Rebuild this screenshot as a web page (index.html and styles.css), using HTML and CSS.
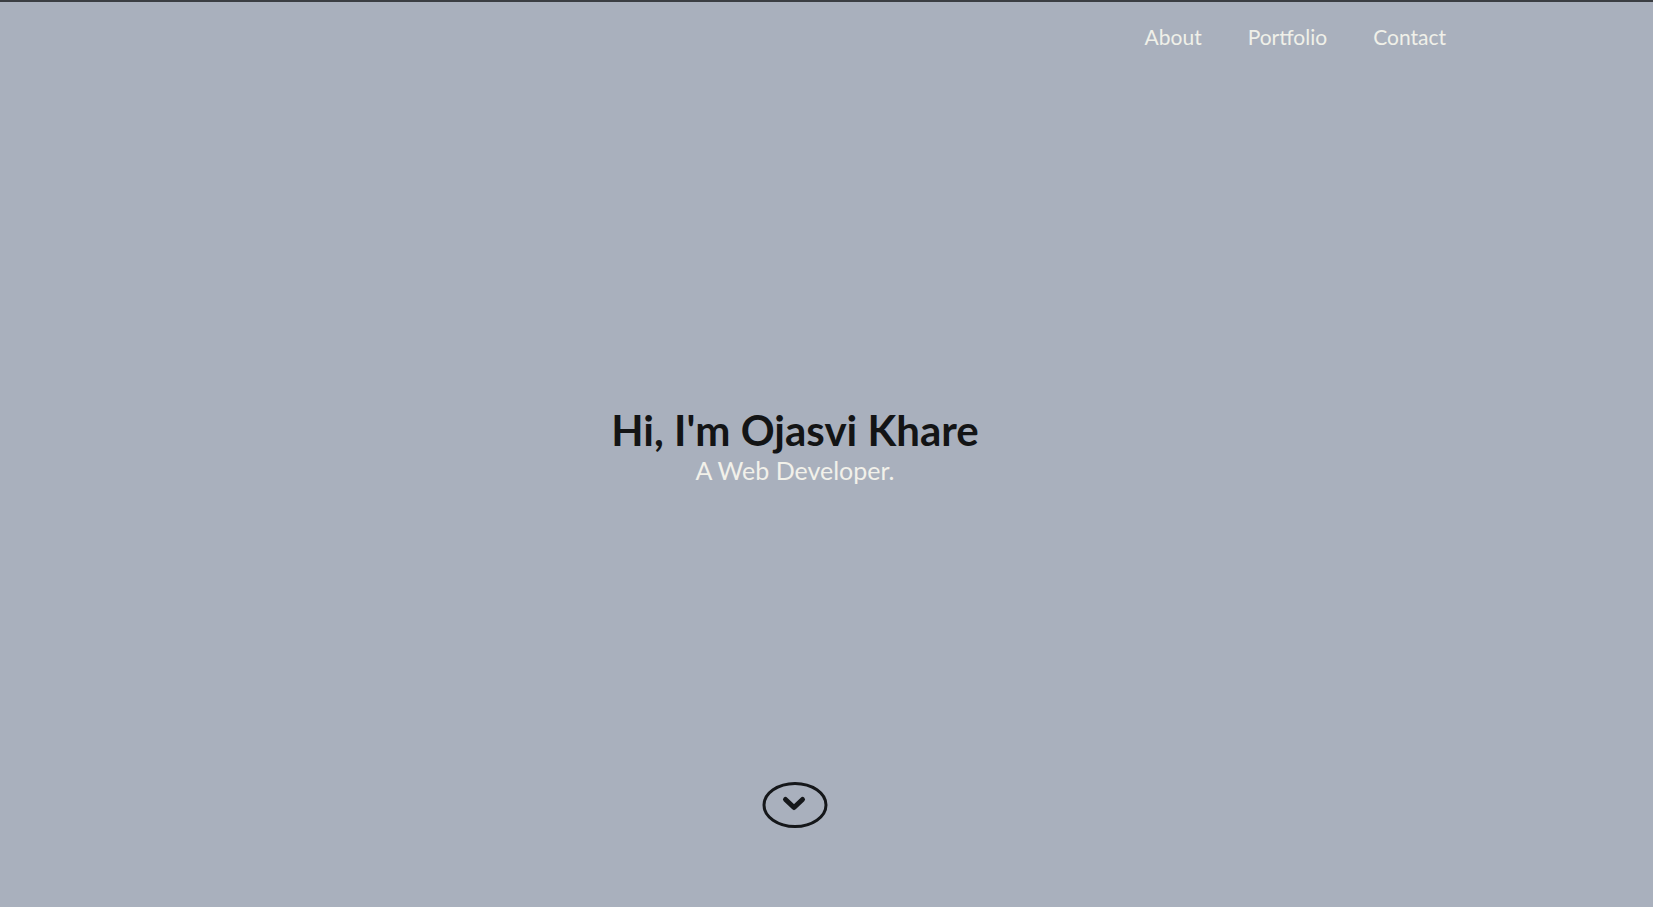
FILE: index.html
```html
<!DOCTYPE html>
<html lang="en">
<head>
<meta charset="utf-8">
<title>Ojasvi Khare</title>
<link rel="stylesheet" href="styles.css">
</head>
<body>
<div class="page">
  <header class="header">
    <nav class="nav">
      <a href="#about" class="nav-link">About</a>
      <a href="#portfolio" class="nav-link">Portfolio</a>
      <a href="#contact" class="nav-link">Contact</a>
    </nav>
  </header>
  <main class="hero">
    <h1 class="hero-title">Hi, I'm Ojasvi Khare</h1>
    <p class="hero-sub">A Web Developer.</p>
  </main>
  <div class="scroll">
    <a href="#about" class="scroll-btn" aria-label="Scroll down">
      <svg width="66" height="48" viewBox="0 0 66 48" fill="none">
        <ellipse cx="33" cy="24" rx="31" ry="21.5" stroke="#15171a" stroke-width="3"/>
        <path d="M23.5 18.5 L32 26.5 L40.5 18.5" stroke="#15171a" stroke-width="5" stroke-linecap="round" stroke-linejoin="round"/>
      </svg>
    </a>
  </div>
</div>
</body>
</html>
```
FILE: styles.css
```css
html, body {
  margin: 0;
  padding: 0;
}
body {
  background: #a9b0bd;
  border-top: 2px solid #3b3e43;
  font-family: "Lato", "Open Sans", sans-serif;
  overflow: hidden;
}
.page {
  height: 905px;
  display: flex;
  flex-direction: column;
}
.header {
  display: flex;
  justify-content: flex-end;
  padding: 21px 207px 0 0;
}
.nav {
  display: flex;
  gap: 46px;
}
.nav-link {
  color: #f0f0e9;
  text-decoration: none;
  font-size: 21px;
  line-height: 28px;
}
.hero {
  flex: 1;
  display: flex;
  flex-direction: column;
  align-items: center;
  padding: 0 63px 0 0;
  margin-top: 356px;
}
.hero-title {
  margin: 0;
  font-size: 42px;
  line-height: 46px;
  font-weight: 700;
  color: #131415;
}
.hero-sub {
  margin: 0;
  font-size: 25px;
  line-height: 34px;
  color: #f2f1ea;
}
.scroll {
  display: flex;
  justify-content: center;
  padding: 0 63px 78px 0;
}
.scroll-btn {
  display: block;
  line-height: 0;
}
```
